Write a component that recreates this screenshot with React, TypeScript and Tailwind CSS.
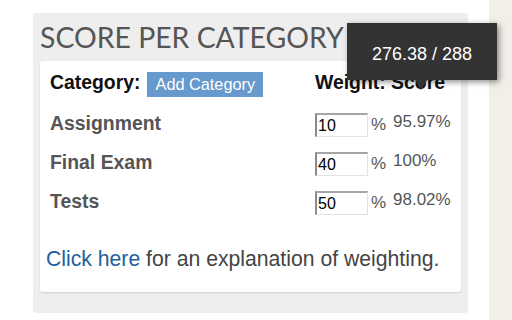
import React from "react";

const rows = [
  { name: "Assignment", weight: "10", score: "95.97%" },
  { name: "Final Exam", weight: "40", score: "100%" },
  { name: "Tests", weight: "50", score: "98.02%" },
];

export default function App() {
  return (
    <div
      className="relative w-[512px] h-[320px] bg-white flex overflow-hidden"
      style={{ fontFamily: '"Liberation Sans", Arial, sans-serif' }}
    >
      <div className="w-[489px] h-full pl-[33px] pt-[13px]">
        <div className="w-[435px] h-[300px] bg-[#eeeeee] rounded-[3px] px-[7px]">
          <div
            className="h-[48px] leading-[48px] text-[28.4px] text-[#555555] whitespace-nowrap"
            style={{ fontFamily: 'Lato, "Liberation Sans", sans-serif' }}
          >
            SCORE PER CATEGORY
          </div>
          <div className="w-[421px] h-[231px] bg-white rounded-[3px] shadow-[0_1px_2px_rgba(0,0,0,0.12)] px-[6px] pt-[11px]">
            <div className="flex items-start h-[25px] pl-[4px]">
              <div className="w-[265px] flex items-start">
                <span className="text-[19.4px] leading-[20px] font-bold text-[#111111]">Category:</span>
                <span className="ml-[6px] h-[25px] leading-[24px] pl-[9px] pr-[8px] bg-[#6699cc] text-white text-[16.3px] whitespace-nowrap">
                  Add Category
                </span>
              </div>
              <span className="text-[19.4px] leading-[20px] font-bold text-[#111111] whitespace-nowrap">
                Weight: Score
              </span>
            </div>
            <div className="mt-[13px] pl-[4px]">
              {rows.map((r) => (
                <div key={r.name} className="flex items-start h-[39px]">
                  <div className="w-[265px] mt-[1px] text-[19.4px] leading-[24px] font-bold text-[#555555]">
                    {r.name}
                  </div>
                  <div className="mt-[3px] w-[53px] h-[24px] border-l-2 border-t-2 border-r border-b border-l-[#8a8a8a] border-t-[#a5a5a5] border-r-[#e2e2e2] border-b-[#e2e2e2] pl-[1px] pt-[2px] text-[16px] leading-[18px] text-black">
                    {r.weight}
                  </div>
                  <div className="w-[25px] pl-[3px] mt-[3px] text-[17px] leading-[24px] text-[#555555]">%</div>
                  <div className="mt-[2px] text-[17px] leading-[20px] text-[#555555]">{r.score}</div>
                </div>
              ))}
            </div>
            <div className="mt-[20px] text-[21.2px] leading-[24px] text-[#444444] whitespace-nowrap">
              <span className="text-[#22609c]">Click here</span> for an explanation of weighting.
            </div>
          </div>
        </div>
      </div>
      <div className="w-[23px] h-full bg-[#f2efe9]" />

      <div className="absolute left-[347px] top-[23px] w-[150px] h-[57px] bg-[#333333] shadow-[2px_2px_6px_rgba(0,0,0,0.45)] flex items-center justify-center pt-[4px] text-white text-[18px] leading-[20px]">
        276.38 / 288
      </div>
      <div className="absolute left-[415px] top-[80px] w-0 h-0 border-l-[6px] border-r-[6px] border-t-[10px] border-l-transparent border-r-transparent border-t-[#333333]" />
    </div>
  );
}
